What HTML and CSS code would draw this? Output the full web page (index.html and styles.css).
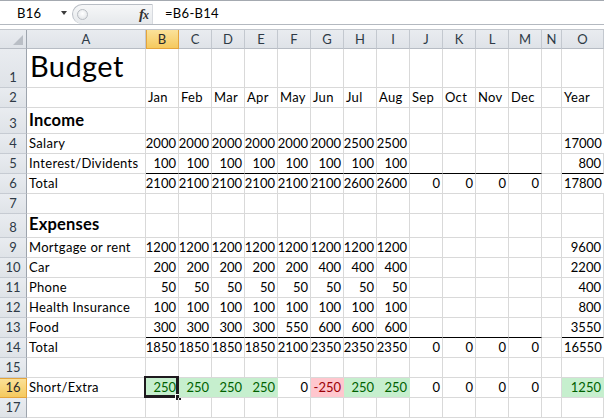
FILE: index.html
```html
<!DOCTYPE html>
<html>
<head>
<meta charset="utf-8">
<link rel="stylesheet" href="styles.css">
</head>
<body>
<div class="fbar">
  <div class="namebox"><span class="ref">B16</span><span class="dd"></span></div>
  <div class="fxpanel"><span class="knob"></span><span class="fx"><i>f</i><i class="x">x</i></span></div>
  <div class="formula">=B6-B14</div>
</div>
<div class="gap"></div>
<div class="sheet">
  <div class="r hdr">
    <div class="c corner"></div><div class="c ch">A</div><div class="c ch on">B</div><div class="c ch">C</div><div class="c ch">D</div><div class="c ch">E</div><div class="c ch">F</div><div class="c ch">G</div><div class="c ch">H</div><div class="c ch">I</div><div class="c ch">J</div><div class="c ch">K</div><div class="c ch">L</div><div class="c ch">M</div><div class="c ch">N</div><div class="c ch">O</div>
  </div>
  <div class="r r1">
    <div class="c rh">1</div><div class="c title">Budget</div><div class="c"></div><div class="c"></div><div class="c"></div><div class="c"></div><div class="c"></div><div class="c"></div><div class="c"></div><div class="c"></div><div class="c"></div><div class="c"></div><div class="c"></div><div class="c"></div><div class="c"></div><div class="c"></div>
  </div>
  <div class="r">
    <div class="c rh">2</div><div class="c"></div><div class="c">Jan</div><div class="c">Feb</div><div class="c">Mar</div><div class="c">Apr</div><div class="c">May</div><div class="c">Jun</div><div class="c">Jul</div><div class="c">Aug</div><div class="c">Sep</div><div class="c">Oct</div><div class="c">Nov</div><div class="c">Dec</div><div class="c"></div><div class="c">Year</div>
  </div>
  <div class="r r3">
    <div class="c rh">3</div><div class="c sec">Income</div><div class="c"></div><div class="c"></div><div class="c"></div><div class="c"></div><div class="c"></div><div class="c"></div><div class="c"></div><div class="c"></div><div class="c"></div><div class="c"></div><div class="c"></div><div class="c"></div><div class="c"></div><div class="c"></div>
  </div>
  <div class="r">
    <div class="c rh">4</div><div class="c">Salary</div><div class="c n">2000</div><div class="c n">2000</div><div class="c n">2000</div><div class="c n">2000</div><div class="c n">2000</div><div class="c n">2000</div><div class="c n">2500</div><div class="c n">2500</div><div class="c"></div><div class="c"></div><div class="c"></div><div class="c"></div><div class="c"></div><div class="c n">17000</div>
  </div>
  <div class="r">
    <div class="c rh">5</div><div class="c">Interest/Dividents</div><div class="c n ul">100</div><div class="c n ul">100</div><div class="c n ul">100</div><div class="c n ul">100</div><div class="c n ul">100</div><div class="c n ul">100</div><div class="c n ul">100</div><div class="c n ul">100</div><div class="c ul"></div><div class="c ul"></div><div class="c ul"></div><div class="c ul"></div><div class="c"></div><div class="c n ul">800</div>
  </div>
  <div class="r">
    <div class="c rh">6</div><div class="c">Total</div><div class="c n">2100</div><div class="c n">2100</div><div class="c n">2100</div><div class="c n">2100</div><div class="c n">2100</div><div class="c n">2100</div><div class="c n">2600</div><div class="c n">2600</div><div class="c n">0</div><div class="c n">0</div><div class="c n">0</div><div class="c n">0</div><div class="c"></div><div class="c n">17800</div>
  </div>
  <div class="r">
    <div class="c rh">7</div><div class="c"></div><div class="c"></div><div class="c"></div><div class="c"></div><div class="c"></div><div class="c"></div><div class="c"></div><div class="c"></div><div class="c"></div><div class="c"></div><div class="c"></div><div class="c"></div><div class="c"></div><div class="c"></div><div class="c"></div>
  </div>
  <div class="r r8">
    <div class="c rh">8</div><div class="c sec">Expenses</div><div class="c"></div><div class="c"></div><div class="c"></div><div class="c"></div><div class="c"></div><div class="c"></div><div class="c"></div><div class="c"></div><div class="c"></div><div class="c"></div><div class="c"></div><div class="c"></div><div class="c"></div><div class="c"></div>
  </div>
  <div class="r">
    <div class="c rh">9</div><div class="c">Mortgage or rent</div><div class="c n">1200</div><div class="c n">1200</div><div class="c n">1200</div><div class="c n">1200</div><div class="c n">1200</div><div class="c n">1200</div><div class="c n">1200</div><div class="c n">1200</div><div class="c"></div><div class="c"></div><div class="c"></div><div class="c"></div><div class="c"></div><div class="c n">9600</div>
  </div>
  <div class="r">
    <div class="c rh">10</div><div class="c">Car</div><div class="c n">200</div><div class="c n">200</div><div class="c n">200</div><div class="c n">200</div><div class="c n">200</div><div class="c n">400</div><div class="c n">400</div><div class="c n">400</div><div class="c"></div><div class="c"></div><div class="c"></div><div class="c"></div><div class="c"></div><div class="c n">2200</div>
  </div>
  <div class="r">
    <div class="c rh">11</div><div class="c">Phone</div><div class="c n">50</div><div class="c n">50</div><div class="c n">50</div><div class="c n">50</div><div class="c n">50</div><div class="c n">50</div><div class="c n">50</div><div class="c n">50</div><div class="c"></div><div class="c"></div><div class="c"></div><div class="c"></div><div class="c"></div><div class="c n">400</div>
  </div>
  <div class="r">
    <div class="c rh">12</div><div class="c">Health Insurance</div><div class="c n">100</div><div class="c n">100</div><div class="c n">100</div><div class="c n">100</div><div class="c n">100</div><div class="c n">100</div><div class="c n">100</div><div class="c n">100</div><div class="c"></div><div class="c"></div><div class="c"></div><div class="c"></div><div class="c"></div><div class="c n">800</div>
  </div>
  <div class="r">
    <div class="c rh">13</div><div class="c">Food</div><div class="c n ul">300</div><div class="c n ul">300</div><div class="c n ul">300</div><div class="c n ul">300</div><div class="c n ul">550</div><div class="c n ul">600</div><div class="c n ul">600</div><div class="c n ul">600</div><div class="c ul"></div><div class="c ul"></div><div class="c ul"></div><div class="c ul"></div><div class="c"></div><div class="c n ul">3550</div>
  </div>
  <div class="r">
    <div class="c rh">14</div><div class="c">Total</div><div class="c n">1850</div><div class="c n">1850</div><div class="c n">1850</div><div class="c n">1850</div><div class="c n">2100</div><div class="c n">2350</div><div class="c n">2350</div><div class="c n">2350</div><div class="c n">0</div><div class="c n">0</div><div class="c n">0</div><div class="c n">0</div><div class="c"></div><div class="c n">16550</div>
  </div>
  <div class="r">
    <div class="c rh">15</div><div class="c"></div><div class="c"></div><div class="c"></div><div class="c"></div><div class="c"></div><div class="c"></div><div class="c"></div><div class="c"></div><div class="c"></div><div class="c"></div><div class="c"></div><div class="c"></div><div class="c"></div><div class="c"></div><div class="c"></div>
  </div>
  <div class="r">
    <div class="c rh on">16</div><div class="c">Short/Extra</div><div class="c n good active">250<span class="selbox"><span class="handle"></span></span></div><div class="c n good">250</div><div class="c n good">250</div><div class="c n good">250</div><div class="c n">0</div><div class="c n bad">-250</div><div class="c n good">250</div><div class="c n good">250</div><div class="c n">0</div><div class="c n">0</div><div class="c n">0</div><div class="c n">0</div><div class="c"></div><div class="c n good">1250</div>
  </div>
  <div class="r">
    <div class="c rh">17</div><div class="c"></div><div class="c"></div><div class="c"></div><div class="c"></div><div class="c"></div><div class="c"></div><div class="c"></div><div class="c"></div><div class="c"></div><div class="c"></div><div class="c"></div><div class="c"></div><div class="c"></div><div class="c"></div><div class="c"></div>
  </div>
</div>
</body>
</html>
```

FILE: styles.css
```css
html, body {
  margin: 0;
  padding: 0;
  background: #ffffff;
}
body {
  width: 604px;
  height: 418px;
  overflow: hidden;
  font-family: Lato, "Open Sans", sans-serif;
  font-size: 13px;
  color: #000;
}

/* formula bar */
.fbar {
  height: 23px;
  border-top: 1px solid #a4a9b0;
  border-bottom: 1px solid #b4b9c0;
  display: flex;
  background: #fff;
}
.namebox {
  width: 72px;
  display: flex;
  align-items: center;
  position: relative;
}
.ref {
  padding-left: 17px;
  font-size: 13px;
  letter-spacing: 0.3px;
  color: #000;
}
.dd {
  margin-left: 20px;
  width: 0;
  height: 0;
  border-left: 3.5px solid transparent;
  border-right: 3.5px solid transparent;
  border-top: 4px solid #3c3c3c;
  margin-top: 1px;
}
.fxpanel {
  margin-top: 3px;
  width: 81px;
  height: 20px;
  border: 1px solid #b9bec5;
  border-right: 1px solid #d7dadf;
  border-bottom: none;
  border-radius: 11px 0 0 11px;
  background: linear-gradient(#f6f7f8, #e6e9ec);
  display: flex;
  align-items: center;
  justify-content: space-between;
  padding: 0 3px 0 3px;
  box-sizing: border-box;
}
.knob {
  width: 9px;
  height: 9px;
  border-radius: 50%;
  border: 1px solid #b8bcc2;
  background: radial-gradient(circle at 50% 40%, #ffffff, #dde0e4);
  margin-left: 1px;
}
.fx {
  font-family: "Liberation Serif", serif;
  font-size: 15px;
  color: #333;
  font-weight: bold;
  margin-right: 1px;
  letter-spacing: -1px;
}
.fx .x {
  font-size: 12px;
}
.formula {
  flex: 1;
  display: flex;
  align-items: center;
  padding-left: 12px;
  font-size: 13px;
  letter-spacing: 0.3px;
}
.gap {
  height: 4px;
  border-bottom: 1px solid #c2c6cc;
}

/* sheet */
.sheet {
  display: flex;
  flex-direction: column;
}
.r {
  display: grid;
  grid-template-columns: 27px 119px repeat(12, 33px) 20px 1fr;
  height: 20px;
}
.r.hdr { height: 19px; }
.r.r1 { height: 39px; }
.r.r3 { height: 26px; }
.r.r8 { height: 24px; }

.c {
  box-sizing: border-box;
  border-right: 1px solid #d9d9d9;
  border-bottom: 1px solid #d9d9d9;
  display: flex;
  align-items: flex-end;
  padding: 0 2px 2px 2px;
  line-height: 15px;
  white-space: nowrap;
  position: relative;
  letter-spacing: 0.3px;
}
.n {
  justify-content: flex-end;
  letter-spacing: 0;
}

.hdr .c, .rh {
  background: linear-gradient(#e9ecf0, #dfe3e8);
  border-right: 1px solid #c3c8cf;
  border-bottom: 1px solid #b7bcc4;
  color: #2e3a46;
  justify-content: center;
  align-items: center;
  padding: 0;
  letter-spacing: 0;
}
.rh {
  align-items: flex-end;
  padding-bottom: 2px;
  border-bottom-color: #c6cbd2;
  border-right-color: #9da4ad;
}
.hdr .corner {
  border-right-color: #9da4ad;
}
.corner::after {
  content: "";
  position: absolute;
  right: 3px;
  bottom: 3px;
  border-left: 10px solid transparent;
  border-bottom: 10px solid #b9bec5;
}
.hdr .on, .rh.on {
  background: linear-gradient(#fbe29a, #f5c95e);
  border-right-color: #e4a43c;
  border-bottom-color: #e4a43c;
  color: #2a2a2a;
}
.hdr .on { box-shadow: inset 1px 0 0 #e4a43c; }
.rh.on { box-shadow: inset 0 1px 0 #e4a43c; }

.title {
  font-size: 29px;
  line-height: 34px;
  padding-bottom: 4px;
  padding-left: 3px;
  letter-spacing: 0.4px;
}
.sec {
  font-weight: bold;
  font-size: 16.5px;
  line-height: 20px;
  padding-bottom: 3px;
  letter-spacing: 0.2px;
}
.ul { border-bottom-color: #000; }

.good {
  background: #c6efce;
  color: #006100;
  border-right-color: #c6efce;
}
.bad {
  background: #ffc7ce;
  color: #9c0006;
  border-right-color: #ffc7ce;
}
.selbox {
  position: absolute;
  left: -2px;
  top: -2px;
  right: -1px;
  bottom: -1px;
  border: 2px solid #1f1a1f;
  border-right-width: 3px;
  border-bottom-width: 3px;
}
.handle {
  position: absolute;
  right: -5px;
  bottom: -5px;
  width: 5px;
  height: 5px;
  background: #1f1a1f;
  border: 1px solid #ffffff;
  border-right: none;
  border-bottom: none;
}
```
